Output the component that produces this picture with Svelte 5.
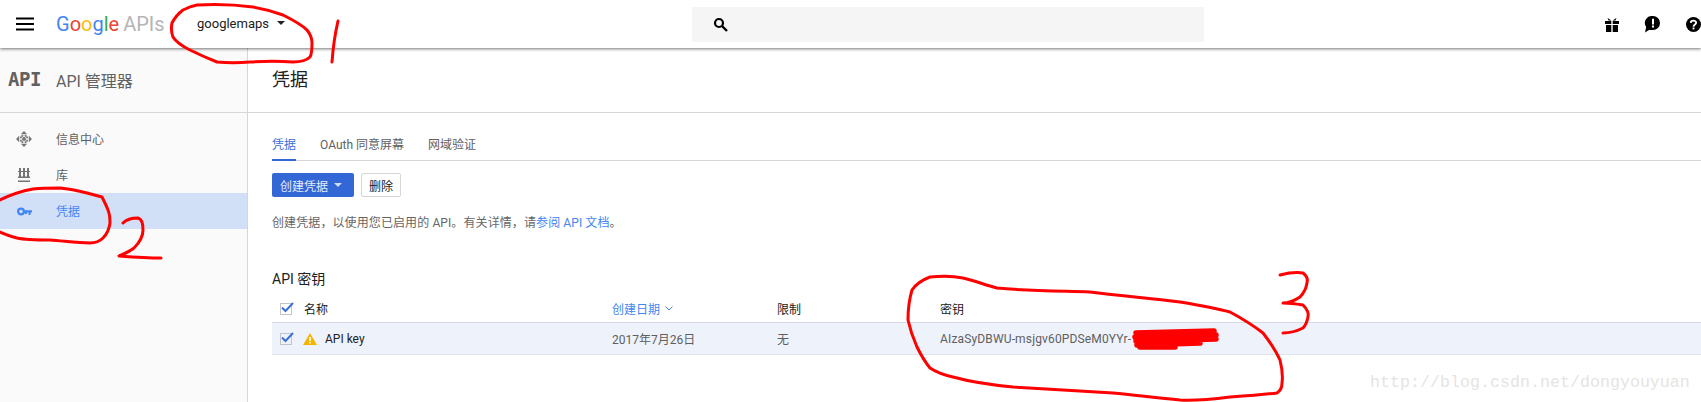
<script>
  const nav = [
    { label: '信息中心', icon: 'move' },
    { label: '库', icon: 'lib' },
    { label: '凭据', icon: 'key', active: true }
  ];
  const tabs = ['凭据', 'OAuth 同意屏幕', '网域验证'];
  const logo = [['G', '#4285f4'], ['o', '#ea4335'], ['o', '#fbbc05'], ['g', '#4285f4'], ['l', '#34a853'], ['e', '#ea4335']];
</script>

<div class="page">
  <header class="top">
    <svg class="burger" width="20" height="14" viewBox="0 0 20 14"><path d="M1 1.500h18M1 7h18M1 12.500h18" stroke="#000" stroke-width="2"/></svg>
    <div class="logo"><span class="g">{#each logo as [c, col]}<span style="color:{col}">{c}</span>{/each}</span><span class="apis">APIs</span></div>
    <div class="project">googlemaps <i class="caret dark"></i></div>
    <div class="search">
      <svg width="15" height="15" viewBox="0 0 15 15" fill="none" stroke="#000"><circle cx="6" cy="6" r="4" stroke-width="2.200"/><path d="M9 9l5 5" stroke-width="2.400"/></svg>
    </div>
    <div class="actions">
      <svg width="14" height="15" viewBox="0 0 14 15"><path d="M0 4h6.300v3H0zM7.700 4H14v3H7.700zM1 8h5.300v7H1zM7.700 8H13v7H7.700zM2.500 1l4 2.500h-3zM11.500 1l-4 2.500h3z"/></svg>
      <svg width="17" height="18" viewBox="0 0 17 18"><path d="M9 1a7 7 0 0 1 0 14H5L1 17.500l1.200-5.500A7 7 0 0 1 9 1z"/><path d="M8 3.800h2V9.500H8zM8 10.500h2v2H8z" fill="#fff"/></svg>
      <svg width="15" height="15" viewBox="0 0 16 16"><circle cx="8" cy="8" r="8"/><path d="M5 6.300C5.200 3 10.800 3 10.800 6.200 10.800 8 8 8 8 10.300" fill="none" stroke="#fff" stroke-width="2"/><path d="M7 11.200h2v2H7z" fill="#fff"/></svg>
    </div>
  </header>

  <div class="body">
    <aside class="side">
      <div class="brand"><span class="api">API</span><span class="brand-t">API 管理器</span></div>
      <nav>
        {#each nav as n}
          <div class="item" class:active={n.active}>
            <span class="nav-ic">
              {#if n.icon === 'move'}
                <svg width="16" height="16" viewBox="0 0 16 16" fill="#757575"><path d="M8 0l3.200 3.200H4.800zM8 16l-3.200-3.200h6.400zM0 8l3.200-3.200v6.400zM16 8l-3.200 3.200V4.800z"/><circle cx="8" cy="8" r="2"/><path d="M5.500 4h1.800v1.800H5.500zM8.700 4h1.800v1.800H8.700zM5.500 10.200h1.800V12H5.500zM8.700 10.200h1.800V12H8.700zM4 5.500h1.800v1.800H4zM4 8.700h1.800v1.800H4zM10.200 5.500H12v1.800h-1.800zM10.200 8.700H12v1.800h-1.800z"/></svg>
              {:else if n.icon === 'lib'}
                <svg width="12" height="14" viewBox="0 0 12 14" fill="#757575"><path d="M1 0h2v9H1zM5 0h2v9H5zM9 0h2v9H9zM0 3h12v1H0zM0 8.500h12V10H0zM0 12.500h12V14H0z"/></svg>
              {:else}
                <svg width="15" height="9" viewBox="0 0 15 9"><circle cx="4" cy="4.500" r="2.900" fill="none" stroke="#4285f4" stroke-width="2.200"/><path d="M6 3.300h9v2.200h-1.500V8h-2V5.500H10V7H8V5.500H6z" fill="#4285f4"/></svg>
              {/if}
            </span>
            <span>{n.label}</span>
          </div>
        {/each}
      </nav>
    </aside>

    <main class="main">
      <div class="title-row"><h1>凭据</h1></div>
      <div class="content">
        <div class="tabs">
          {#each tabs as t, i}
            <div class="tab" class:on={i === 0}>{t}</div>
          {/each}
        </div>
        <div class="btns">
          <div class="btn primary">创建凭据 <i class="caret light"></i></div>
          <div class="btn plain">删除</div>
        </div>
        <p class="desc">创建凭据，以使用您已启用的 API。有关详情，请<span class="link">参阅 API 文档</span>。</p>
        <h2>API 密钥</h2>
        <div class="row head">
          <span class="c-check"><span class="cb"><svg width="15" height="13" viewBox="0 0 15 13"><path d="M2 6.500l3.500 3.500L13 2" fill="none" stroke="#3b6fd8" stroke-width="2"/></svg></span></span>
          <span class="c-name strong">名称</span>
          <span class="c-date link">创建日期 <svg width="8" height="5" viewBox="0 0 8 5"><path d="M.5.500L4 4 7.500.500" fill="none" stroke="#4285f4"/></svg></span>
          <span class="c-limit strong">限制</span>
          <span class="c-key strong">密钥</span>
        </div>
        <div class="row data">
          <span class="c-check"><span class="cb"><svg width="15" height="13" viewBox="0 0 15 13"><path d="M2 6.500l3.500 3.500L13 2" fill="none" stroke="#3b6fd8" stroke-width="2"/></svg></span></span>
          <span class="c-name strong">
            <svg class="warn" width="14" height="12" viewBox="0 0 14 12"><path d="M7 0l7 12H0z" fill="#f4b400"/><path d="M6.200 4h1.600v4H6.200zM6.200 9h1.600v1.500H6.200z" fill="#fff"/></svg>
            API key
          </span>
          <span class="c-date">2017年7月26日</span>
          <span class="c-limit">无</span>
          <span class="c-key keytext">AIzaSyDBWU-msjgv60PDSeM0YYr-</span>
        </div>
      </div>
    </main>
  </div>

  <svg class="ink" width="1701" height="402" viewBox="0 0 1701 402" fill="none" stroke="#f00" stroke-width="3" stroke-linecap="round" stroke-linejoin="round">
    <path d="M197 5C215 4 238 5 253 7C265 9 275 12 283 15C293 20 302 25 307 30C311 35 312 39 312 43C312 49 312 54 310 57C306 61 300 62 293 62C280 61 265 61 250 62C238 63 228 63 217 62C207 58 198 54 190 50C182 46 176 42 173 37C171 32 171 28 172 23C175 17 179 13 183 10C187 8 192 6 197 5Z"/>
    <path d="M338 21C335 34 333 48 332 62"/>
    <path d="M0 200C10 195 22 191 33 189C43 188 52 188 60 188C70 189 79 191 87 193L102 197C105 203 107 207 108 210C110 215 110 219 110 223C109 230 106 235 103 238C99 242 95 243 90 243C78 243 64 241 50 240C37 240 26 240 17 238C10 236 4 234 0 232"/>
    <path d="M123 223C127 219 132 218 138 218C142 219 143 224 143 230C143 237 139 243 134 248C129 252 124 254 119 256C133 257 147 258 161 258"/>
    <path d="M1280 275C1288 273 1296 272 1303 273C1307 276 1308 280 1307 283C1306 289 1303 294 1300 297C1294 301 1289 303 1283 303C1290 303 1297 304 1303 305C1307 309 1309 313 1308 317C1307 322 1305 326 1303 328C1297 331 1290 333 1283 333"/>
    <path d="M930 277C942 276 953 276 963 278C975 281 986 285 997 288C1028 291 1060 291 1090 292C1120 296 1150 298 1180 302C1198 305 1215 308 1230 312C1243 319 1254 326 1263 333C1270 342 1276 351 1280 360C1282 368 1283 376 1282 383C1282 388 1280 391 1277 393C1262 395 1246 396 1230 397C1214 399 1197 401 1180 400C1157 398 1135 395 1113 393C1080 391 1046 389 1013 387C992 385 971 382 953 377C944 375 936 372 930 368C925 362 921 355 917 347C913 338 910 329 908 320C908 310 909 300 912 290C916 284 922 280 930 277Z"/>
    <path class="scribble" d="M1136 333L1214 331M1135 337L1216 335M1136 341L1216 339M1137 345L1200 343M1140 347L1175 347"/>
  </svg>
  <div class="mark">http://blog.csdn.net/dongyouyuan</div>
</div>

<style>
  :global(body) { margin: 0; background: #fff; }
  .page {
    position: relative; width: 1701px; height: 402px; overflow: hidden; background: #fff;
    font-family: Roboto, "Noto Sans CJK SC", sans-serif; font-size: 12px; color: #5f5f5f;
    display: flex; flex-direction: column;
  }
  .top {
    position: relative; z-index: 2; flex: 0 0 48px; height: 48px; background: #fff;
    box-shadow: 0 1px 3px rgba(0,0,0,.55);
    display: flex; align-items: center;
  }
  .burger { margin-left: 15px; flex: none; margin-top: -1px; }
  .logo { margin-left: 21px; width: 141px; font-size: 20px; line-height: 1; white-space: nowrap; margin-top: -1px; flex: none; }
  .apis { color: #b5b5b5; margin-left: 4px; }
  .project { width: 495px; flex: none; color: #212121; font-size: 13px; display: flex; align-items: center; gap: 4px; margin-top: -2px; }
  .caret { display: inline-block; width: 0; height: 0; border-left: 4px solid transparent; border-right: 4px solid transparent; margin-left: 4px; }
  .caret.dark { border-top: 4px solid #212121; }
  .caret.light { border-top: 4px solid #cfdcf6; margin-left: 6px; }
  .search { width: 512px; height: 35px; flex: none; background: #f5f5f5; display: flex; align-items: center; padding-left: 21px; box-sizing: border-box; }
  .actions { margin-left: auto; display: flex; align-items: center; gap: 25px; justify-content: flex-end; }

  .body { flex: 1; display: flex; min-height: 0; }
  .side { flex: 0 0 247px; background: #fafafa; border-right: 1px solid #d6d6d6; }
  .brand { height: 64px; border-bottom: 1px solid #d6d6d6; display: flex; align-items: center; }
  .api { margin-left: 8px; width: 48px; font-family: "DejaVu Sans Mono", monospace; font-weight: 700; font-size: 19px; letter-spacing: -.4px; color: #616161; padding-bottom: 3px; }
  .brand-t { font-size: 16px; color: #616161; padding-bottom: 1px; }
  nav { padding-top: 8px; background: #fafafa; }
  .item { height: 36px; display: flex; align-items: center; font-size: 12px; color: #616161; }
  .item > span:last-child { padding-bottom: 2px; }
  .nav-ic { width: 56px; display: flex; justify-content: center; padding-right: 8px; box-sizing: border-box; }
  .item.active { background: #d2e0f7; color: #4285f4; }

  .main { flex: 1; min-width: 0; }
  .title-row { height: 64px; border-bottom: 1px solid #d6d6d6; display: flex; align-items: center; padding-left: 24px; }
  h1 { margin: 0 0 5px; font-size: 18px; font-weight: 400; color: #212121; }
  .content { padding-left: 24px; }
  .tabs { display: flex; gap: 24px; height: 48px; box-sizing: border-box; border-bottom: 1px solid #d6d6d6; align-items: flex-end; }
  .tab { height: 28px; box-sizing: border-box; line-height: 27px; color: #616161; }
  .tab.on { color: #3b6fd8; border-bottom: 2px solid #3367d6; margin-bottom: -1px; height: 29px; }
  .btns { display: flex; gap: 7px; margin-top: 12px; }
  .btn { height: 24px; box-sizing: border-box; border-radius: 2px; display: flex; align-items: center; justify-content: center; }
  .primary { width: 82px; background: #3367d6; color: #e4ecfb; padding-right: 4px; }
  .plain { width: 40px; background: #fff; border: 1px solid #d6d6d6; color: #212121; }
  .desc { margin: 18px 0 0; line-height: 17px; color: #666; letter-spacing: .1px; }
  .link { color: #4285f4; }
  h2 { margin: 37px 0 0; font-size: 14px; line-height: 20px; font-weight: 400; color: #212121; }
  .row { display: flex; align-items: center; box-sizing: border-box; }
  .head { height: 34px; padding-top: 6px; border-bottom: 1px solid #d5d9e4; }
  .data { height: 32px; background: #eef2fb; border-bottom: 1px solid #dfe3ec; }
  .c-check { width: 32px; display: flex; padding-left: 8px; box-sizing: border-box; }
  .cb { width: 12px; height: 12px; border: 1px solid #c4c4c4; box-sizing: border-box; position: relative; display: block; }
  .cb svg { position: absolute; left: -1px; top: -3px; }
  .c-name { width: 308px; display: flex; align-items: center; gap: 8px; }
  .warn { margin-left: -1px; }
  .strong { color: #212121; }
  .c-date { width: 165px; display: flex; align-items: center; gap: 5px; }
  .c-limit { width: 163px; }
  .c-key { white-space: nowrap; }
  .keytext { letter-spacing: .15px; color: #5f5f5f; }

  .ink { position: absolute; left: 0; top: 0; z-index: 3; pointer-events: none; }
  .scribble { stroke-width: 5.500; }
  .mark { position: absolute; z-index: 3; left: 1370px; top: 373px; font-family: "Liberation Mono", monospace; font-size: 16.670px; color: #e6e4df; white-space: nowrap; }
</style>
